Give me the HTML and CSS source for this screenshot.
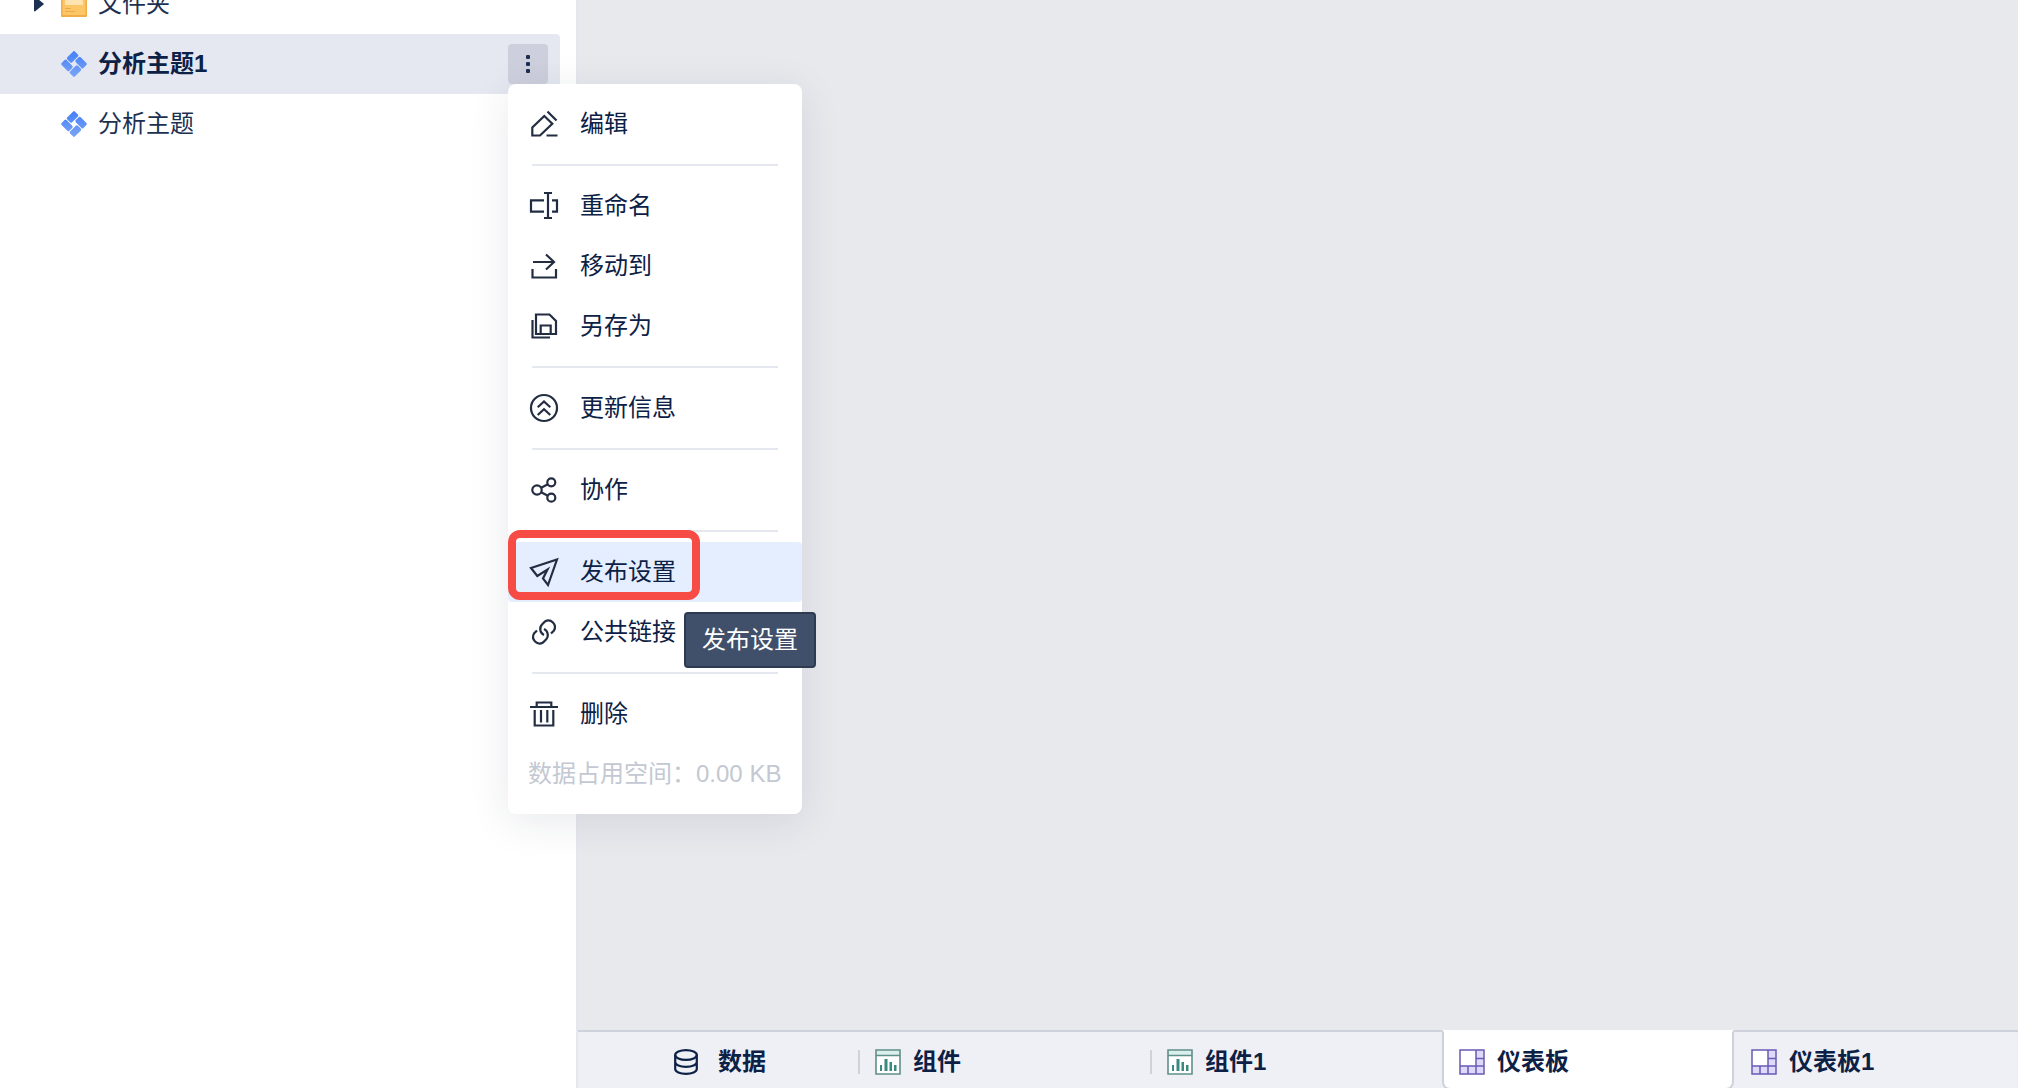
FILE: index.html
```html
<!DOCTYPE html>
<html lang="zh-CN">
<head>
<meta charset="utf-8">
<meta name="viewport" content="width=device-width, initial-scale=1">
<title>分析主题1</title>
<link rel="stylesheet" href="styles.css">
</head>
<body>
<svg class="defs" aria-hidden="true">
  <defs>
    <linearGradient id="blue" gradientUnits="userSpaceOnUse" x1="-9" y1="-9" x2="9" y2="9">
      <stop offset="0" stop-color="#4480f8"/><stop offset="1" stop-color="#7ba4f5"/>
    </linearGradient>
    <symbol id="theme" viewBox="0 0 28 28">
      <g transform="translate(14 14) rotate(45)" fill="url(#blue)">
        <rect x="-9.500" y="-9.500" width="7" height="11" rx="1.500"/>
        <rect x="-1.500" y="-9.500" width="11" height="7" rx="1.500"/>
        <rect x="2.500" y="-1.500" width="7" height="11" rx="1.500"/>
        <rect x="-9.500" y="2.500" width="11" height="7" rx="1.500"/>
      </g>
    </symbol>
    <symbol id="chart" viewBox="0 0 26 26">
      <path d="M1 1H25V25H1Z" fill="#fff"/>
      <path d="M1 1H25V6.500H1Z" fill="#d9efeb"/>
      <path d="M1 1H25V25H1ZM1 6.500H25" fill="none" stroke="#5f8f8a" stroke-width="1.600"/>
      <path d="M5 16h2v6H5zM9.500 10h3v12h-3zM14.500 13h2.500v9h-2.500zM19 16h2.500v6H19z" fill="#3b8a80"/>
    </symbol>
    <symbol id="board" viewBox="0 0 26 26">
      <path d="M1 1H25V25H1Z" fill="#ded9f8"/>
      <path d="M1 1H17V17H1Z" fill="#fff"/>
      <path d="M1 1H25V25H1ZM17 1V25M1 17H25M17 9.500H25M9 17V25" fill="none" stroke="#6a5bb5" stroke-width="1.500"/>
    </symbol>
  </defs>
</svg>
<div class="app">
  <nav class="sidebar">
    <div class="row">
      <span class="arrow"><svg width="10" height="16" viewBox="0 0 10 16"><path d="M0 1.500Q0 0 1.500 1L9.500 7.500Q10 8 9.500 8.500L1.500 15Q0 16 0 14.500Z" fill="#1c3152"/></svg></span>
      <svg width="28" height="28" viewBox="0 0 28 28"><rect x="1" y="1" width="26" height="26" rx="1" fill="#f0ad45"/><rect x="2.500" y="2" width="23" height="23" fill="#fcc565"/><path d="M5 15V12Q5 9 9 9H19Q23 9 23 12V15Z" fill="#fde3b0"/><path d="M5 18.500H11M5 21.500H15" stroke="#eeaa42" stroke-width="1.200"/></svg>
      <a href="#" class="name">文件夹</a>
    </div>
    <div class="row selected">
      <span class="arrow"></span>
      <svg width="28" height="28"><use href="#theme"/></svg>
      <a href="#" class="name">分析主题1</a>
      <div class="more">
        <button type="button" class="dots" aria-label="更多">
          <svg width="40" height="40" fill="#1c3152"><rect x="18" y="11" width="4" height="4" rx="1"/><rect x="18" y="18" width="4" height="4" rx="1"/><rect x="18" y="25" width="4" height="4" rx="1"/></svg>
        </button>
        <div class="menu">
          <button type="button" class="item"><svg class="icon" viewBox="0 0 32 32"><path d="M4.300 27.500V19.500L16.300 8L24.300 15.700L12 27.500ZM19.500 3.500L28.500 12.500M18.500 27.500H29.500"/></svg>编辑</button>
          <hr>
          <button type="button" class="item"><svg class="icon" viewBox="0 0 32 32"><path d="M16 10.300H3V21.700H16M24 10.300H29V21.700H24M20 3V28M16 3H24M16 28H24"/></svg>重命名</button>
          <button type="button" class="item"><svg class="icon" viewBox="0 0 32 32"><path d="M5 12H26M18 4.500L26 12L18 19.500M4.500 19V27.500H28V19"/></svg>移动到</button>
          <button type="button" class="item"><svg class="icon" viewBox="0 0 32 32"><path d="M4.500 10V27.500H22M8 4.500H21.500L28 11V24H8ZM12.700 24V15.500H22.700V24"/></svg>另存为</button>
          <hr>
          <button type="button" class="item"><svg class="icon" viewBox="0 0 32 32"><circle cx="16" cy="16" r="13"/><path d="M9.700 15.300L16 9.500L22.300 15.300M9.700 23L16 17.200L22.300 23"/></svg>更新信息</button>
          <hr>
          <button type="button" class="item"><svg class="icon" viewBox="0 0 32 32"><circle cx="9" cy="16" r="4.700"/><circle cx="23.300" cy="8.300" r="4"/><circle cx="23.300" cy="23.700" r="4"/><path d="M13.200 13.700L19.800 10.200M13.200 18.300L19.800 21.800"/></svg>协作</button>
          <hr>
          <div class="publish">
            <button type="button" class="item hover" aria-describedby="tip"><svg class="icon" viewBox="0 0 32 32"><path d="M3 12L29 3.500L20 29L15 22.500L19.500 13.500L9.300 20Z"/></svg>发布设置</button>
            <div class="highlight"></div>
            <div class="tooltip" id="tip" role="tooltip">发布设置</div>
          </div>
          <button type="button" class="item"><svg class="icon" viewBox="0 0 32 32"><path d="M23 17.500L26 14.500A6.600 6.600 0 0 0 17 5.500L14 8.500A6.600 6.600 0 0 0 16 19M9 14.500L6 17.500A6.600 6.600 0 0 0 15 26.500L18 23.500A6.600 6.600 0 0 0 16 13"/></svg>公共链接</button>
          <hr>
          <button type="button" class="item"><svg class="icon" viewBox="0 0 32 32"><path d="M2 9H30M8.700 9V4.500H23.300V9M6.700 12V27.500H25.300V12M13 12V24.500M19.300 12V24.500"/></svg>删除</button>
          <div class="usage">数据占用空间：0.00 KB</div>
        </div>
      </div>
    </div>
    <div class="row">
      <span class="arrow"></span>
      <svg width="28" height="28"><use href="#theme"/></svg>
      <a href="#" class="name">分析主题</a>
    </div>
  </nav>
  <main class="stage">
    <div class="canvas"></div>
    <div class="tabs">
      <button type="button" class="tab data"><svg width="24" height="26" viewBox="0 0 24 26" fill="none" stroke="#0c2145" stroke-width="2.200"><ellipse cx="12" cy="6" rx="10.800" ry="4.800"/><path d="M1.200 6V20C1.200 22.800 6 24.800 12 24.800S22.800 22.800 22.800 20V6M1.200 13C1.200 15.800 6 17.800 12 17.800S22.800 15.800 22.800 13"/></svg>数据</button>
      <button type="button" class="tab split"><svg width="26" height="26"><use href="#chart"/></svg>组件</button>
      <button type="button" class="tab split"><svg width="26" height="26"><use href="#chart"/></svg>组件1</button>
      <button type="button" class="tab active"><svg width="26" height="26"><use href="#board"/></svg>仪表板</button>
      <button type="button" class="tab last"><svg width="26" height="26"><use href="#board"/></svg>仪表板1</button>
    </div>
  </main>
</div>
</body>
</html>
```
FILE: styles.css
```css
* { box-sizing: border-box; }

body {
  margin: 0;
  overflow: hidden;
  font: 24px/32px "Liberation Sans", "Noto Sans CJK SC", sans-serif;
  color: #0c2145;
}

button {
  margin: 0;
  padding: 0;
  border: 0;
  background: none;
  font: inherit;
  color: inherit;
  text-align: left;
}

svg { flex: none; display: block; }

.defs { position: absolute; width: 0; height: 0; }

.app { display: flex; height: 100vh; }

/* Topic tree */
.sidebar {
  flex: none;
  width: 578px;
  margin-top: -26px;
  padding-right: 16px;
  border-right: 2px solid #e4e7ef;
  background: #fff;
}

.row {
  display: flex;
  align-items: center;
  height: 60px;
  padding: 0 12px 0 34px;
  color: #1c3152;
}

.row.selected {
  border-radius: 0 4px 4px 0;
  background: #e5e8f0;
  color: #0c2145;
  font-weight: bold;
}

.arrow { width: 26px; }

.name {
  flex: 1;
  margin-left: 10px;
  color: inherit;
  text-decoration: none;
}

.more { position: relative; font-weight: normal; }

.dots {
  display: block;
  border-radius: 4px;
  background: #cdcfdc;
}

/* Context menu */
.menu {
  position: absolute;
  z-index: 1;
  top: 100%;
  left: 0;
  width: 294px;
  padding: 10px 0;
  border-radius: 8px;
  background: #fff;
  box-shadow: 0 8px 40px rgba(30, 40, 70, .1);
}

.menu hr {
  height: 2px;
  margin: 10px 24px;
  border: 0;
  background: #e5e8ef;
}

.item {
  display: flex;
  align-items: center;
  gap: 20px;
  width: 100%;
  height: 60px;
  padding: 0 20px;
}

.item.hover { border-radius: 4px; background: #e5eeff; }

.icon {
  width: 32px;
  height: 32px;
  fill: none;
  stroke: #232d42;
  stroke-width: 2.2;
}

.publish { position: relative; }

.highlight {
  position: absolute;
  top: -12px;
  left: 0;
  width: 192px;
  height: 70px;
  border: 8px solid #f74b46;
  border-radius: 12px;
}

.tooltip {
  position: absolute;
  z-index: 1;
  top: 70px;
  left: 176px;
  padding: 10px 16px;
  border: 2px solid #2d3a50;
  border-radius: 4px;
  background: #41506a;
  color: #fff;
  white-space: nowrap;
}

.usage {
  height: 60px;
  padding: 14px 20px;
  color: #c3c8d2;
  white-space: nowrap;
}

/* Work area */
.stage {
  display: flex;
  flex: 1;
  flex-direction: column;
  min-width: 0;
  background: #e8e9ed;
}

.canvas { flex: 1; }

.tabs {
  display: flex;
  height: 58px;
  overflow: hidden;
  background: #eff0f6;
}

.tab {
  position: relative;
  display: flex;
  flex: none;
  align-items: center;
  gap: 12px;
  width: 292px;
  height: 60px;
  padding: 2px 17px 0;
  border-top: 2px solid #ced2db;
  font-weight: bold;
}

.tab.data { gap: 20px; width: 280px; padding-left: 96px; }

.tab.split::before {
  position: absolute;
  top: 18px;
  left: 0;
  width: 2px;
  height: 24px;
  background: #ced2db;
  content: "";
}

.tab.active {
  padding: 4px 15px 0;
  border: 2px solid #ced2db;
  border-top-color: #fff;
  border-radius: 0 0 8px 8px;
  background: #fff;
}

.tab.last { flex: 1; }
```
